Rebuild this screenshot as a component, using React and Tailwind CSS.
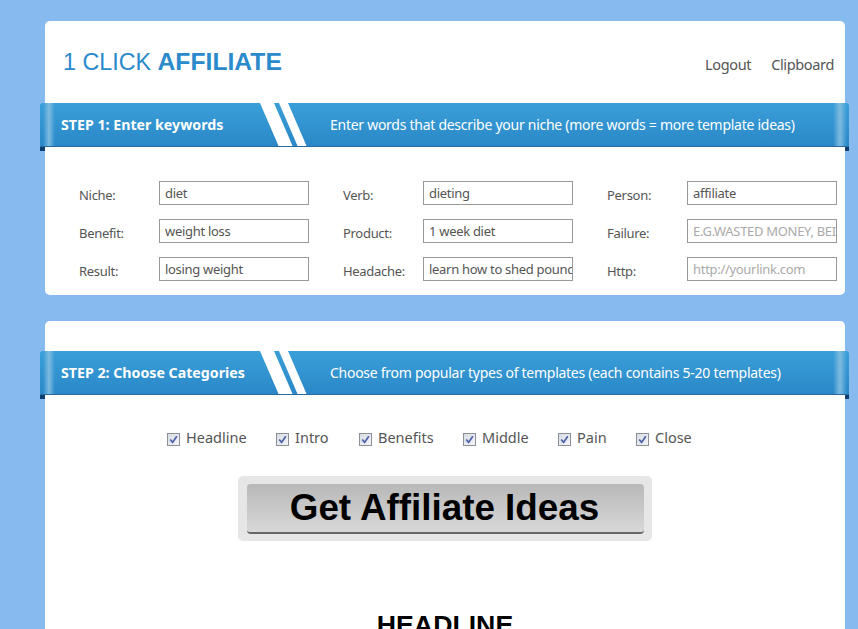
const font = { fontFamily: '"Noto Sans", "Open Sans", sans-serif' };

function Banner({ title, desc }) {
  return (
    <div className="relative -ml-[5px] -mr-[4px] h-[44px]">
      <div className="absolute left-0 bottom-[-4px] w-[5px] h-[6px] bg-[#0e3f72]" />
      <div className="absolute right-0 bottom-[-4px] w-[4px] h-[6px] bg-[#0e3f72]" />
      <div className="relative h-[44px] rounded-t-[3px] border-b border-[#2a6a9e] bg-gradient-to-b from-[#3a9fd8] to-[#2a88c8] flex items-center overflow-hidden">
        <div className="absolute left-[3px] top-0 bottom-0 w-[12px] bg-gradient-to-r from-transparent via-[#7dbbe0] to-transparent" />
        <div className="absolute right-[2px] top-0 bottom-0 w-[14px] bg-gradient-to-r from-transparent via-[#7dbbe0] to-transparent" />
        <svg className="absolute left-0 top-0" width="300" height="44" viewBox="0 0 300 44">
          <polygon points="220,0 234,0 253,44 239,44" fill="#fff" />
          <polygon points="239,0 248,0 267,44 258,44" fill="#fff" />
        </svg>
        <span className="relative ml-[21px] w-[269px] text-[14.2px] font-bold text-white">{title}</span>
        <span className="relative text-[14px] text-white tracking-[-0.27px]">{desc}</span>
      </div>
    </div>
  );
}

function Field({ label, value, placeholder }) {
  return (
    <div className="flex items-center w-[264px] h-[24px] shrink-0">
      <label className="w-[80px] pt-[6px] text-[13px] text-[#555] tracking-[-0.3px]">{label}</label>
      <input
        readOnly
        value={value || ""}
        placeholder={placeholder}
        className="w-[150px] h-[24px] border border-[#999] bg-white pl-[5px] pb-[1px] text-[13px] leading-[20px] tracking-[-0.3px] text-[#555] placeholder:text-[#aaa] outline-none"
        style={font}
      />
    </div>
  );
}

function Check({ label, width }) {
  return (
    <div className="flex items-center shrink-0" style={{ width }}>
      <span className="w-[13px] h-[13px] mt-[3px] border border-[#8a8f98] bg-gradient-to-br from-[#d8dce4] to-[#f4f5f8] flex items-center justify-center shrink-0">
        <svg width="9" height="9" viewBox="0 0 9 9">
          <path d="M1.2 4.5 L3.6 7.4 L7.8 1.2" fill="none" stroke="#4a5fa8" strokeWidth="1.7" />
        </svg>
      </span>
      <span className="ml-[6px] text-[14.5px] text-[#555]">{label}</span>
    </div>
  );
}

export default function App() {
  return (
    <div className="h-[629px] overflow-hidden bg-[#87baef] pt-[21px] pl-[45px] w-full" style={font}>
      <div className="w-[800px] h-[274px] bg-white rounded-[5px]">
        <div className="h-[82px] flex items-center justify-between pl-[18px] pr-[11px]">
          <h1 className="text-[23.3px] text-[#2a8acb] leading-none" style={{ fontFamily: '"Liberation Sans", sans-serif' }}>
            1 CLICK <b className="font-bold text-[24.7px]">AFFILIATE</b>
          </h1>
          <nav className="flex gap-[20px] text-[14.5px] text-[#555] pt-[6px] tracking-[-0.35px]">
            <span>Logout</span>
            <span>Clipboard</span>
          </nav>
        </div>
        <Banner title="STEP 1: Enter keywords" desc="Enter words that describe your niche (more words = more template ideas)" />
        <div className="pl-[34px] pt-[34px] flex flex-col gap-[14px]">
          <div className="flex">
            <Field label="Niche:" value="diet" />
            <Field label="Verb:" value="dieting" />
            <Field label="Person:" value="affiliate" />
          </div>
          <div className="flex">
            <Field label="Benefit:" value="weight loss" />
            <Field label="Product:" value="1 week diet" />
            <Field label="Failure:" placeholder="E.G.WASTED MONEY, BEING BROKE" />
          </div>
          <div className="flex">
            <Field label="Result:" value="losing weight" />
            <Field label="Headache:" value="learn how to shed pounds" />
            <Field label="Http:" placeholder="http://yourlink.com" />
          </div>
        </div>
      </div>

      <div className="mt-[26px] w-[800px] h-[400px] bg-white rounded-t-[5px]">
        <div className="h-[30px]" />
        <Banner title="STEP 2: Choose Categories" desc="Choose from popular types of templates (each contains 5-20 templates)" />
        <div className="mt-[31px] ml-[122px] flex h-[24px] items-center">
          <Check label="Headline" width={109} />
          <Check label="Intro" width={83} />
          <Check label="Benefits" width={104} />
          <Check label="Middle" width={95} />
          <Check label="Pain" width={78} />
          <Check label="Close" width={70} />
        </div>
        <div className="mt-[26px] ml-[193px] w-[414px] h-[65px] bg-[#e6e6e6] rounded-[5px] pt-[8px] pl-[9px]">
          <button
            className="w-[397px] h-[50px] rounded-[4px] border-b-2 border-[#666] bg-gradient-to-b from-[#b8b8b8] to-[#d8d8d8] text-[36.8px] font-bold leading-none text-black pr-[2px]"
            style={{ fontFamily: '"Liberation Sans", sans-serif' }}
          >
            Get Affiliate Ideas
          </button>
        </div>
        <h2
          className="mt-[71px] text-center text-[26.7px] font-bold text-black leading-none"
          style={{ fontFamily: '"Liberation Sans", sans-serif' }}
        >
          HEADLINE
        </h2>
      </div>
    </div>
  );
}
